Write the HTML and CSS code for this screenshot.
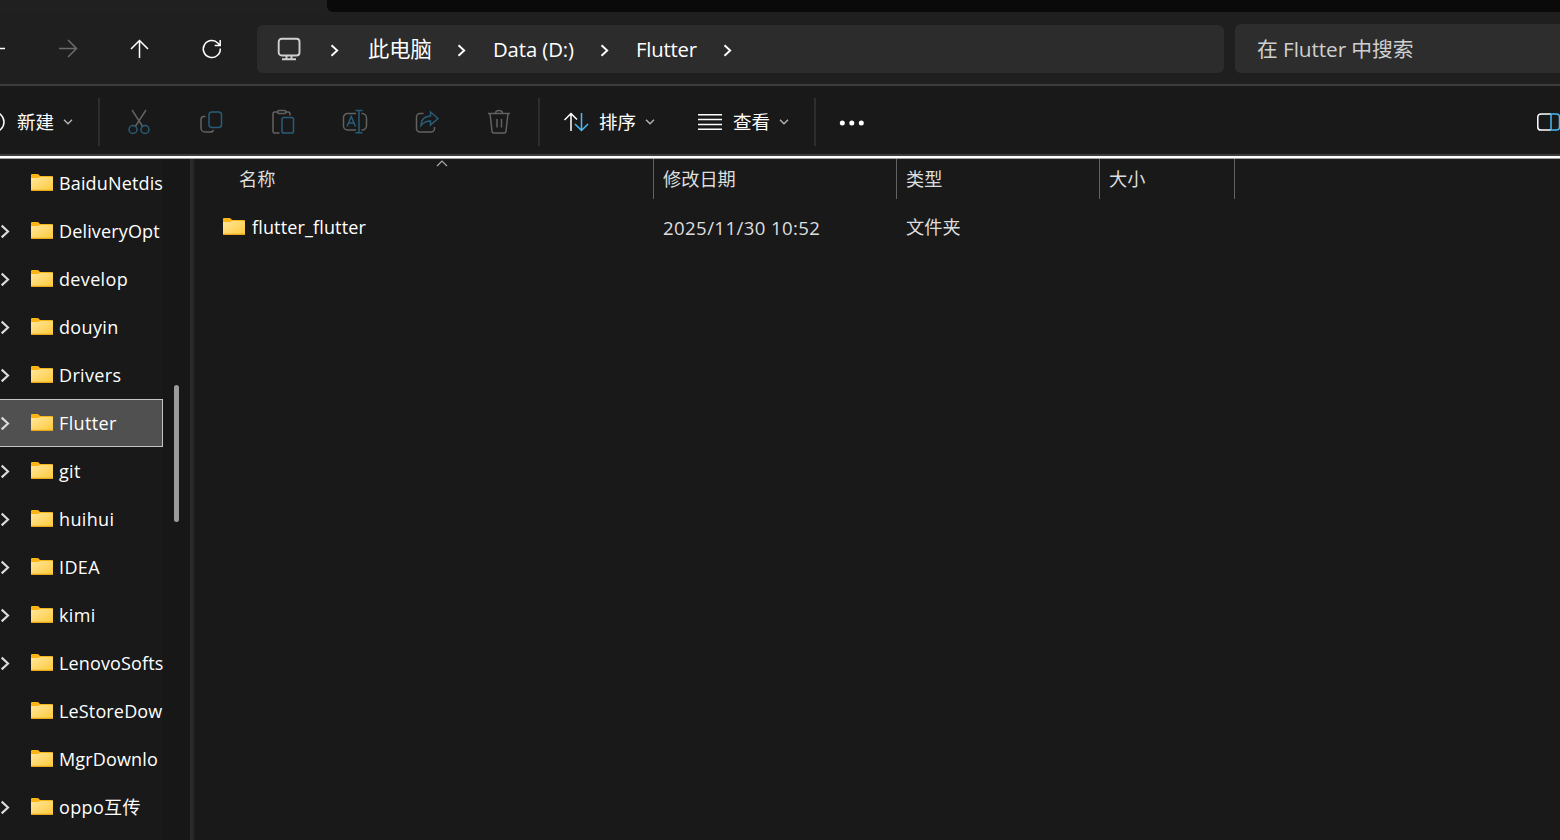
FILE: index.html
```html
<!DOCTYPE html>
<html lang="zh-CN">
<head>
  <meta charset="UTF-8" />
  <title>Flutter</title>
  <link rel="stylesheet" href="styles.css">
</head>
<body>
  <svg class="defs" width="0" height="0">
    <defs>
      <linearGradient id="folderFill" x1="0" y1="0" x2="1" y2="1">
        <stop offset="0" stop-color="#ffe69c"/>
        <stop offset="1" stop-color="#ffca3a"/>
      </linearGradient>
      <symbol id="folder" viewBox="0 0 22 17">
        <path d="M0 1q0-1 1-1h5.500q.7 0 1.200.6L9 2h12q1 0 1 1v5H0z" fill="#fbb615"/>
        <path d="M0 4h7.500l1.300-1H22v13q0 1-1 1H1q-1 0-1-1z" fill="url(#folderFill)"/>
        <path d="M0 15.800h22v.2q0 1-1 1H1q-1 0-1-1z" fill="#e9a51c"/>
      </symbol>
      <symbol id="chevron" viewBox="0 0 9 13">
        <path d="M1.500 1.200l5.700 5.300-5.700 5.300" fill="none" stroke="currentColor" stroke-width="1.900"/>
      </symbol>
      <symbol id="down" viewBox="0 0 10 6">
        <path d="M1 .8l4 4 4-4" fill="none" stroke="currentColor" stroke-width="1.300"/>
      </symbol>
    </defs>
  </svg>

  <div class="window">
    <div class="tabs"><div class="tab-space"></div></div>

    <div class="nav">
      <div class="nav-buttons">
        <svg class="back" width="24" height="24" viewBox="0 0 24 24"><path d="M3 12.500h18"/></svg>
        <svg class="off" width="24" height="24" viewBox="0 0 24 24"><path d="M3 12.500h17.500M12 4l8.500 8.500L12 21"/></svg>
        <svg width="24" height="24" viewBox="0 0 24 24"><path d="M11.500 22V4.500M3 13l8.500-8.500L20 13"/></svg>
        <svg width="24" height="24" viewBox="0 0 24 24"><path d="M20.300 12.500a8.500 8.500 0 1 1-2.300-5.300l2 2.200M20.200 4v5.500h-5.500"/></svg>
      </div>
      <div class="address">
        <svg class="pc" width="24" height="24" viewBox="0 0 24 24"><rect x="1.700" y="1.700" width="20.800" height="16.800" rx="3"/><path d="M9.500 18.500v3.500M14.500 18.500v3.500M5 22.300h14"/></svg>
        <svg class="chev" width="9" height="13"><use href="#chevron"/></svg>
        <span class="crumb crumb-pc">此电脑</span>
        <svg class="chev" width="9" height="13"><use href="#chevron"/></svg>
        <span class="crumb crumb-drive">Data (D:)</span>
        <svg class="chev" width="9" height="13"><use href="#chevron"/></svg>
        <span class="crumb crumb-dir">Flutter</span>
        <svg class="chev" width="9" height="13"><use href="#chevron"/></svg>
      </div>
      <div class="search">在 Flutter 中搜索</div>
    </div>

    <div class="toolbar">
      <div class="new">
        <svg class="plus" width="5" height="24" viewBox="0 0 5 24"><circle cx="-6" cy="12" r="10"/></svg>
        <span>新建</span>
        <svg class="down" width="10" height="6"><use href="#down"/></svg>
      </div>
      <div class="tools">
        <svg width="26" height="26" viewBox="0 0 26 26"><path d="M6 1l11 17M20 1L9 18"/><g class="blue"><circle cx="7" cy="20.500" r="4"/><circle cx="19" cy="20.500" r="4"/></g></svg>
        <svg width="26" height="26" viewBox="0 0 26 26"><path d="M7.500 7.500H6a3 3 0 0 0-3 3v8.500a4 4 0 0 0 4 4h5.500q2.500 0 3-2"/><rect class="blue" x="11" y="3" width="12.500" height="15.500" rx="3"/></svg>
        <svg width="26" height="26" viewBox="0 0 26 26"><path d="M7.500 3H4.500a1.500 1.500 0 0 0-1.500 1.500v18a1.500 1.500 0 0 0 1.500 1.500h5M15.500 3h2.500a2 2 0 0 1 2 2v1.500"/><rect x="7.500" y="1.500" width="8.500" height="3" rx="1.500"/><rect class="blue" x="12" y="8.500" width="11.500" height="15.500" rx="1.800"/></svg>
        <svg width="26" height="26" viewBox="0 0 26 26"><path d="M14 4.500H5.500a4 4 0 0 0-4 4v8.500a4 4 0 0 0 4 4h8.500M19.500 4.500h.5a4.500 4.500 0 0 1 4.500 4.500v7.500a4.500 4.500 0 0 1-4.500 4.500h-.5"/><path class="blue" d="M5 17.500L9.200 7.500l4.300 10M6.500 14h5.500M17 1.500v22M13.500 1.500h7M13.500 23.800h7"/></svg>
        <svg width="26" height="26" viewBox="0 0 26 26"><path d="M9.500 4.500H6a3.500 3.500 0 0 0-3.500 3.500v11.500a3.500 3.500 0 0 0 3.500 3.500h11a3.500 3.500 0 0 0 3.500-3.500v-1.500"/><path class="blue" d="M16.500 3l7.500 6.500-7.500 6.500v-4q-6 0-9.500 4.500 0-9 9.500-9.500z"/></svg>
        <svg width="26" height="26" viewBox="0 0 26 26"><path d="M2 4.500h22M4 4.500l2 17.500a2 2 0 0 0 2 2h10a2 2 0 0 0 2-2L22 4.500M9.500 4.500a3.500 3 0 0 1 7 0M11 10v8.500M15.500 10v8.500"/></svg>
      </div>
      <div class="view">
        <svg width="26" height="22" viewBox="0 0 26 22"><path d="M8 20V2.500M1.500 9L8 2.500 14 8.500"/><path class="bright" d="M18.500 2v17.500M12 13l6.500 6.500L25 13"/></svg>
        <span class="label-sort">排序</span>
        <svg class="down down-sort" width="10" height="6"><use href="#down"/></svg>
        <svg width="24" height="16" viewBox="0 0 24 16"><path d="M0 .8h24M0 5.500h24M0 10.500h24M0 15.200h24"/></svg>
        <span class="label-view">查看</span>
        <svg class="down" width="10" height="6"><use href="#down"/></svg>
      </div>
      <svg class="more" width="26" height="6" viewBox="0 0 26 6"><circle cx="3.300" cy="3" r="2.500"/><circle cx="12.800" cy="3" r="2.500"/><circle cx="22.300" cy="3" r="2.500"/></svg>
      <svg class="pane" width="23" height="18" viewBox="0 0 23 18"><path d="M14 .9H4a3.200 3.200 0 0 0-3.200 3.200v9.800A3.200 3.200 0 0 0 4 17.100h10"/><path class="bright" d="M14 .9h5.500a3 3 0 0 1 3 3v10.200a3 3 0 0 1-3 3H14z"/></svg>
    </div>

    <div class="main">
      <div class="tree" id="tree"></div>
      <div class="scroll"><div class="thumb"></div></div>
      <div class="splitter"></div>
      <div class="files">
        <div class="row head">
          <div class="col name">名称<svg class="sort-mark" width="12" height="7" viewBox="0 0 12 7"><path d="M1 6l5-5 5 5"/></svg></div>
          <div class="col date">修改日期</div>
          <div class="col type">类型</div>
          <div class="col size">大小</div>
        </div>
        <div class="row">
          <div class="col name"><svg class="folder" width="22" height="17"><use href="#folder"/></svg><span class="file-name">flutter_flutter</span></div>
          <div class="col date"><span class="stamp">2025/11/30 10:52</span></div>
          <div class="col type"><span class="kind">文件夹</span></div>
          <div class="col size"></div>
        </div>
      </div>
    </div>
  </div>

  <script>
    // [name, has subfolders]
    const folders = [
      ["BaiduNetdis", false], ["DeliveryOpt", true], ["develop", true],
      ["douyin", true], ["Drivers", true], ["Flutter", true], ["git", true],
      ["huihui", true], ["IDEA", true], ["kimi", true], ["LenovoSofts", true],
      ["LeStoreDow", false], ["MgrDownlo", false], ["oppo互传", true]
    ];
    document.getElementById("tree").innerHTML = folders.map(([name, sub]) => `
      <div class="item${name === "Flutter" ? " selected" : ""}">
        <div class="arrow">${sub ? '<svg width="10" height="15"><use href="#chevron"/></svg>' : ""}</div>
        <svg class="folder" width="22" height="17"><use href="#folder"/></svg>
        <span${name.length > 8 ? ' class="long"' : ""}>${name}</span>
      </div>`).join("");
  </script>
</body>
</html>
```
FILE: styles.css
```css
* {
  box-sizing: border-box;
}
body {
  margin: 0;
  background: #191919;
  color: #fff;
  font-family: "Open Sans", "Noto Sans CJK SC", sans-serif;
  font-size: 18px;
  overflow: hidden;
}
svg {
  display: block;
  flex: none;
  fill: none;
  stroke: currentColor;
  stroke-width: 1.5;
}
svg.folder {
  stroke: none;
  margin-bottom: 1px;
}
.defs {
  position: absolute;
}
.window {
  width: 1560px;
  height: 840px;
  display: flex;
  flex-direction: column;
  overflow: hidden;
}
.tabs {
  height: 12px;
  background: #202020;
  padding-left: 327px;
}
.tab-space {
  height: 12px;
  background: #0a0a0a;
  border-bottom-left-radius: 6px;
}
.nav {
  height: 74px;
  background: #1f1f1f;
  border-bottom: 2px solid #3c3c3c;
  display: flex;
  align-items: flex-start;
}
.nav-buttons {
  width: 257px;
  display: flex;
  gap: 48px;
  margin-top: 24px;
}
.nav-buttons svg:first-child {
  margin-left: -16px;
}
.off {
  color: #6b6b6b;
}
.address {
  width: 967px;
  height: 48px;
  margin-top: 13px;
  border-radius: 6px;
  background: #2c2c2c;
  display: flex;
  align-items: center;
  padding-left: 20px;
}
.search {
  width: 325px;
  height: 49px;
  margin: 12px 0 0 11px;
  padding-left: 22px;
  background: #2d2d2d;
  border-radius: 6px 0 0 6px;
  color: #cfcfcf;
  font-size: 20.8px;
  line-height: 51px;
  letter-spacing: -0.1px;
  white-space: pre;
}
.pc {
  color: #d0d0d0;
  stroke-width: 1.9;
  margin: 0 3px 1px 0;
}
.chev {
  margin: 2px 0 0 26px;
}
.crumb {
  font-size: 20.3px;
  line-height: 48px;
  margin-left: 27px;
  white-space: pre;
}
.crumb-pc {
  width: 64px;
  margin-left: 29px;
  margin-right: -1px;
  font-size: 21.3px;
}
.crumb-drive {
  width: 81px;
  letter-spacing: -0.1px;
}
.crumb-dir {
  width: 61px;
  letter-spacing: -0.2px;
}
.toolbar {
  height: 70px;
  border-bottom: 2px solid #3c3c3c;
  display: flex;
  align-items: center;
}
.toolbar span {
  font-size: 18.5px;
  line-height: 30px;
}
.down {
  color: #b8b8b8;
}
.new {
  width: 100px;
  height: 48px;
  margin-top: 4px;
  border-right: 2px solid #2d2d2d;
  display: flex;
  align-items: center;
}
.new span {
  width: 38px;
  margin: 0 8px 0 12px;
}
.tools {
  width: 440px;
  height: 48px;
  margin-top: 4px;
  padding-left: 26px;
  border-right: 2px solid #2d2d2d;
  display: flex;
  align-items: center;
  gap: 46px;
  color: #626262;
}
.blue {
  color: #285c78;
  stroke: currentColor;
}
.bright {
  stroke: #4cb9f4;
}
.view {
  width: 276px;
  height: 48px;
  margin-top: 4px;
  padding-left: 23px;
  border-right: 2px solid #2d2d2d;
  display: flex;
  align-items: center;
}
.label-sort {
  width: 38px;
  margin: 0 8px 0 10px;
}
.down-sort {
  margin-right: 43px;
}
.label-view {
  width: 38px;
  margin: 0 8px 0 11px;
}
.more {
  margin: 5px 0 0 23px;
  fill: #fff;
  stroke: none;
}
.pane {
  margin: 4px 0 0 auto;
}
.main {
  height: 684px;
  border-top: 2px solid #fff;
  box-shadow: inset 0 1px #a0a0a0;
  padding-top: 1px;
  display: flex;
}
.tree {
  width: 163px;
  overflow: hidden;
}
.item {
  height: 48px;
  display: flex;
  align-items: center;
  white-space: nowrap;
  line-height: 46px;
  letter-spacing: 0.35px;
}
.long {
  letter-spacing: 0.15px;
}
.selected {
  background: #505050;
  border: 1px solid #c4c4c4;
  border-left: 0;
}
.arrow {
  width: 31px;
  flex: none;
  color: #dcdcdc;
}
.item .folder {
  margin-right: 6px;
}
.scroll {
  width: 27px;
  background: #171717;
  padding: 226px 0 0 11px;
}
.thumb {
  width: 5px;
  height: 137px;
  border-radius: 3px;
  background: #9b9b9b;
}
.splitter {
  width: 5px;
  background: #202020;
  box-shadow: inset 3px 0 #2b2b2b;
}
.row {
  display: flex;
  height: 48px;
}
.col {
  display: flex;
  align-items: center;
  padding-left: 9px;
  color: #dedede;
  font-size: 18.2px;
}
.head {
  height: 40px;
  margin-bottom: 4px;
}
.head .col {
  border-right: 1px solid #626262;
  padding-bottom: 2px;
}
.name {
  width: 459px;
  padding-left: 28px;
}
.head .name {
  padding-left: 44px;
  position: relative;
}
.sort-mark {
  position: absolute;
  left: 241px;
  top: 1px;
  color: #aaa;
  stroke-width: 1.2;
}
.file-name {
  margin-left: 7px;
  font-size: 18px;
  letter-spacing: 0.15px;
  color: #fff;
}
.stamp {
  font-size: 18.6px;
  letter-spacing: 0.4px;
}
.kind {
  padding-bottom: 2px;
}
.date {
  width: 243px;
}
.type {
  width: 203px;
}
.size {
  width: 135px;
}
```
